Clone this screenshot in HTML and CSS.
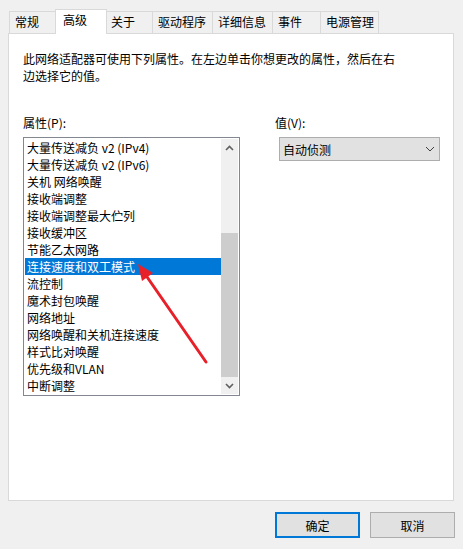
FILE: index.html
```html
<!DOCTYPE html>
<html lang="zh-CN">
<head>
<meta charset="utf-8">
<title>高级</title>
<link rel="stylesheet" href="styles.css">
</head>
<body>
<div class="dialog">
  <div class="tabs">
    <div class="tab w47">常规</div>
    <div class="tab w52 selected">高级</div>
    <div class="tab w47 tight">关于</div>
    <div class="tab w61">驱动程序</div>
    <div class="tab w61">详细信息</div>
    <div class="tab w49">事件</div>
    <div class="tab w59">电源管理</div>
  </div>
  <div class="panel">
    <p class="desc">此网络适配器可使用下列属性。在左边单击你想更改的属性，然后在右边选择它的值。</p>
    <div class="fields">
      <div class="col-left">
        <div class="label">属性(P):</div>
        <div class="listbox">
          <ul class="items">
            <li>大量传送减负 v2 (IPv4)</li>
            <li>大量传送减负 v2 (IPv6)</li>
            <li>关机 网络唤醒</li>
            <li>接收端调整</li>
            <li>接收端调整最大伫列</li>
            <li>接收缓冲区</li>
            <li>节能乙太网路</li>
            <li class="active">连接速度和双工模式</li>
            <li>流控制</li>
            <li>魔术封包唤醒</li>
            <li>网络地址</li>
            <li>网络唤醒和关机连接速度</li>
            <li>样式比对唤醒</li>
            <li>优先级和VLAN</li>
            <li>中断调整</li>
          </ul>
          <div class="scrollbar">
            <div class="sb-btn">
              <svg width="9" height="6" viewBox="0 0 9 6"><polyline points="1,5 4.5,1.5 8,5" fill="none" stroke="#606060" stroke-width="1.6"/></svg>
            </div>
            <div class="sb-track"><div class="sb-thumb"></div></div>
            <div class="sb-btn">
              <svg width="9" height="6" viewBox="0 0 9 6"><polyline points="1,1 4.5,4.5 8,1" fill="none" stroke="#606060" stroke-width="1.6"/></svg>
            </div>
          </div>
        </div>
      </div>
      <div class="col-right">
        <div class="label">值(V):</div>
        <div class="combo">
          <span class="combo-text">自动侦测</span>
          <svg class="combo-arrow" width="10" height="6" viewBox="0 0 10 6"><polyline points="1,1 5,5 9,1" fill="none" stroke="#404040" stroke-width="1"/></svg>
        </div>
      </div>
    </div>
  </div>
  <div class="buttons">
    <button class="btn default">确定</button>
    <button class="btn">取消</button>
  </div>
  <svg class="annotation" width="463" height="549" viewBox="0 0 463 549">
    <line x1="206" y1="362" x2="145" y2="274" stroke="#e8202a" stroke-width="3" stroke-linecap="round"/>
    <polygon points="138,264 153,273 142,281" fill="#e8202a"/>
  </svg>
</div>
</body>
</html>
```
FILE: styles.css
```css
html, body {
  margin: 0;
  padding: 0;
  background: #f0f0f0;
}
body {
  font-family: "Noto Sans CJK SC", "Noto Sans", sans-serif;
  font-size: 12px;
  color: #000;
  width: 463px;
  height: 549px;
  overflow: hidden;
}
.dialog {
  position: relative;
  width: 463px;
  height: 549px;
}
.tabs {
  display: flex;
  align-items: flex-end;
  padding: 9px 0 0 10px;
  height: 24px;
}
.tab {
  box-sizing: border-box;
  height: 22px;
  margin-left: -1px;
  padding: 1px 0 0 5px;
  line-height: 17px;
  border: 1px solid #d9d9d9;
  border-bottom: none;
  background: #f0f0f0;
  white-space: nowrap;
}
.tab.tight { padding-left: 4px; }
.tab.selected {
  position: relative;
  z-index: 2;
  height: 25px;
  margin-bottom: -1px;
  padding-left: 7px;
  background: #fff;
}
.w47 { width: 47px; }
.w52 { width: 52px; }
.w61 { width: 61px; }
.w49 { width: 49px; }
.w59 { width: 59px; }
.panel {
  box-sizing: border-box;
  margin: 0 9px 0 8px;
  height: 468px;
  border: 1px solid #d9d9d9;
  background: #fff;
  padding: 16px 14px 0 14px;
}
.desc {
  margin: 0;
  width: 378px;
  line-height: 17px;
}
.fields {
  display: grid;
  grid-template-columns: 217px 165px;
  column-gap: 35px;
  margin-top: 30px;
}
.label {
  line-height: 17px;
  height: 17px;
}
.listbox {
  box-sizing: border-box;
  margin-top: 6px;
  width: 217px;
  height: 259px;
  border: 1px solid #828790;
  padding: 1px;
  display: flex;
  background: #fff;
}
.items {
  list-style: none;
  margin: 0;
  padding: 0;
  width: 196px;
}
.items li {
  height: 17px;
  line-height: 17px;
  padding-left: 2px;
  white-space: nowrap;
}
.items li.active {
  background: #0078d7;
  color: #fff;
}
.scrollbar {
  width: 17px;
  display: flex;
  flex-direction: column;
  background: #f0f0f0;
}
.sb-btn {
  height: 17px;
  display: flex;
  align-items: center;
  justify-content: center;
}
.sb-track {
  flex: 1;
  display: flex;
  flex-direction: column;
  justify-content: flex-end;
}
.sb-thumb {
  height: 144px;
  background: #cdcdcd;
}
.combo {
  box-sizing: border-box;
  margin: 6px 0 0 4px;
  width: 161px;
  height: 24px;
  border: 1px solid #adadad;
  background: #e1e1e1;
  display: flex;
  align-items: center;
  justify-content: space-between;
  padding: 0 4px 0 3px;
}
.combo-text { line-height: 17px; }
.buttons {
  display: flex;
  justify-content: flex-end;
  gap: 10px;
  margin-top: 11px;
  padding-right: 8px;
}
.btn {
  box-sizing: border-box;
  width: 85px;
  height: 26px;
  border: 1px solid #adadad;
  background: #e1e1e1;
  font-family: "Noto Sans CJK SC", "Noto Sans", sans-serif;
  font-size: 12px;
  color: #000;
  padding: 0;
  line-height: 17px;
}
.btn.default {
  border: 2px solid #0078d7;
}
.annotation {
  position: absolute;
  left: 0;
  top: 0;
  pointer-events: none;
}
```
